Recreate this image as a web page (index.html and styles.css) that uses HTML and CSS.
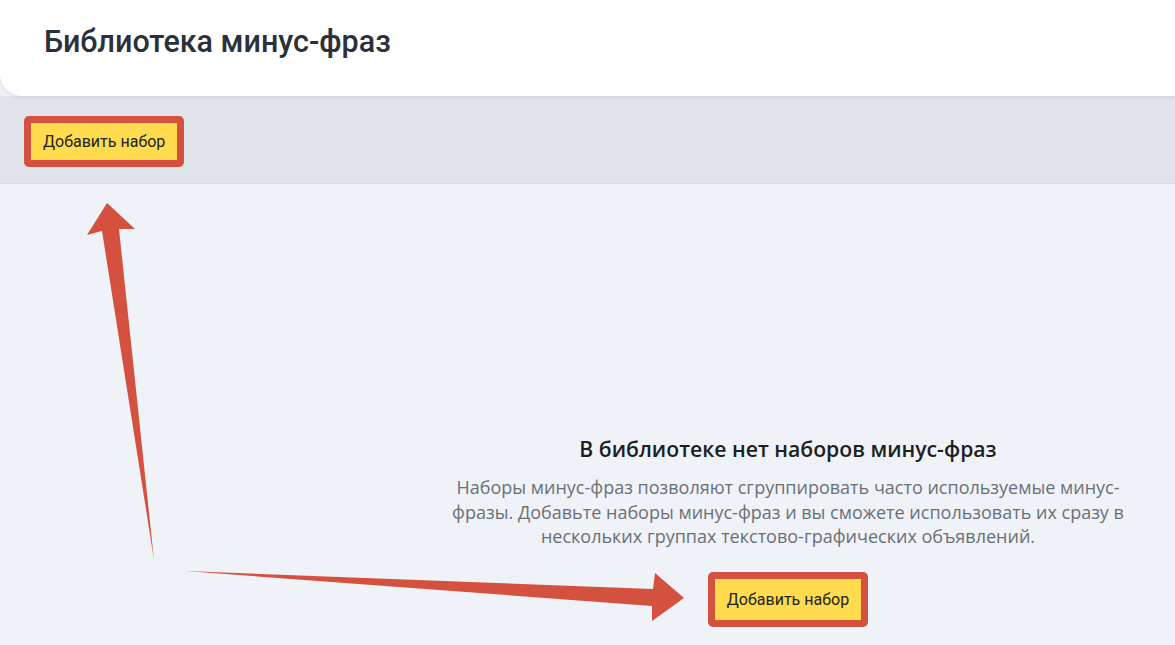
FILE: index.html
```html
<!DOCTYPE html>
<html lang="ru">
<head>
    <meta charset="UTF-8">
    <meta name="viewport" content="width=device-width, initial-scale=1.0">
    <title>Библиотека минус-фраз</title>
    <link rel="stylesheet" href="styles.css">
</head>
<body>
    <div class="header">
        <h1 class="title">Библиотека минус-фраз</h1>
    </div>
    <div class="toolbar">
        <span class="mark mark-top">
            <button class="add-btn" type="button">Добавить набор</button>
        </span>
    </div>
    <div class="content">
        <div class="empty">
            <h2 class="empty-title">В библиотеке нет наборов минус-фраз</h2>
            <p class="empty-text">Наборы минус-фраз позволяют сгруппировать часто используемые минус-фразы. Добавьте наборы минус-фраз и вы сможете использовать их сразу в нескольких группах текстово-графических объявлений.</p>
            <span class="mark mark-bottom">
                <button class="add-btn" type="button">Добавить набор</button>
            </span>
        </div>
    </div>

    <!-- стрелки-пометки поверх страницы -->
    <svg class="arrows" width="1175" height="645" viewBox="0 0 1175 645">
        <polygon points="154,560 119,229 135,229 107,203 87,235 102,231" fill="#d4513f"/>
        <polygon points="185,571 653,589 655,573 684,598 652,621 652,606" fill="#d4513f"/>
    </svg>
</body>
</html>
```

FILE: styles.css
```css
body {
    margin: 0;
    padding: 0;
    font-family: Roboto, "Noto Sans", Arial, sans-serif;
    background-color: #eff2f7;
    height: 645px;
    overflow: hidden;
    position: relative;
}
.header {
    position: relative;
    z-index: 1;
    height: 96px;
    box-sizing: border-box;
    padding: 22px 0 0 44px;
    background: #fff;
    border-bottom-left-radius: 22px;
    box-shadow: 0 2px 5px rgba(0,0,0,0.07);
}
.title {
    margin: 0;
    font-size: 30.5px;
    line-height: 40px;
    font-weight: 500;
    color: #2b313b;
}
.toolbar {
    height: 88px;
    box-sizing: border-box;
    padding: 20px 0 0 24px;
    background-color: #e1e4e8;
    border-bottom: 1px solid #d6d9dd;
}
.mark {
    display: inline-block;
    padding: 7px;
    background-color: #d4513f;
    border-radius: 5px;
}
.add-btn {
    display: block;
    background-color: #ffdb4d;
    color: #222;
    font-family: Roboto, Arial, sans-serif;
    font-size: 16px;
    border: none;
    border-radius: 0;
    padding: 0 12px;
    height: 37px;
    cursor: pointer;
}
.mark-bottom .add-btn {
    height: 41px;
}
.content {
    display: flex;
    justify-content: center;
    padding: 251px 0 0 401px;
}
.empty {
    display: flex;
    flex-direction: column;
    align-items: center;
    text-align: center;
    font-family: "Open Sans", Roboto, sans-serif;
}
.empty-title {
    margin: 0 0 12px;
    font-size: 21.2px;
    line-height: 28px;
    font-weight: 600;
    color: #1c1f24;
}
.empty-text {
    margin: 0 0 23px;
    width: 676px;
    font-size: 18px;
    line-height: 24.5px;
    color: #6a7079;
}
.arrows {
    position: absolute;
    left: 0;
    top: 0;
    pointer-events: none;
}
```
